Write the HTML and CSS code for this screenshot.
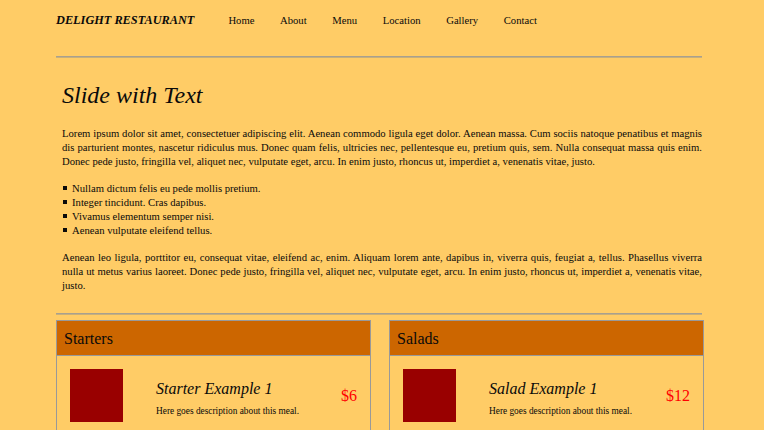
FILE: index.html
```html
<!DOCTYPE html>
<html>
<head>
<meta charset="utf-8">
<title>Delight Restaurant</title>
<link rel="stylesheet" href="styles.css">
</head>
<body>
<div class="page">
  <header class="topbar">
    <div class="brand">DELIGHT RESTAURANT</div>
    <nav class="nav">
      <a href="#">Home</a>
      <a href="#">About</a>
      <a href="#">Menu</a>
      <a href="#">Location</a>
      <a href="#">Gallery</a>
      <a href="#">Contact</a>
    </nav>
  </header>
  <hr class="rule rule-top">
  <section class="intro">
    <h1>Slide with Text</h1>
    <p>Lorem ipsum dolor sit amet, consectetuer adipiscing elit. Aenean commodo ligula eget dolor. Aenean massa. Cum sociis natoque penatibus et magnis dis parturient montes, nascetur ridiculus mus. Donec quam felis, ultricies nec, pellentesque eu, pretium quis, sem. Nulla consequat massa quis enim. Donec pede justo, fringilla vel, aliquet nec, vulputate eget, arcu. In enim justo, rhoncus ut, imperdiet a, venenatis vitae, justo.</p>
    <ul>
      <li>Nullam dictum felis eu pede mollis pretium.</li>
      <li>Integer tincidunt. Cras dapibus.</li>
      <li>Vivamus elementum semper nisi.</li>
      <li>Aenean vulputate eleifend tellus.</li>
    </ul>
    <p class="p2">Aenean leo ligula, porttitor eu, consequat vitae, eleifend ac, enim. Aliquam lorem ante, dapibus in, viverra quis, feugiat a, tellus. Phasellus viverra nulla ut metus varius laoreet. Donec pede justo, fringilla vel, aliquet nec, vulputate eget, arcu. In enim justo, rhoncus ut, imperdiet a, venenatis vitae, justo.</p>
  </section>
  <hr class="rule rule-bottom">
  <section class="menus">
    <div class="panel">
      <div class="panel-head">Starters</div>
      <div class="panel-body">
        <div class="thumb"></div>
        <div class="dish">
          <div class="dish-title">Starter Example 1</div>
          <div class="dish-desc">Here goes description about this meal.</div>
        </div>
        <div class="price">$6</div>
      </div>
    </div>
    <div class="panel">
      <div class="panel-head">Salads</div>
      <div class="panel-body">
        <div class="thumb"></div>
        <div class="dish">
          <div class="dish-title">Salad Example 1</div>
          <div class="dish-desc">Here goes description about this meal.</div>
        </div>
        <div class="price">$12</div>
      </div>
    </div>
  </section>
</div>
</body>
</html>
```

FILE: styles.css
```css
html, body {
  margin: 0;
  padding: 0;
  background: #ffcc66;
}
body {
  font-family: "Liberation Serif", "Times New Roman", serif;
  color: #0a0a0a;
}
.page {
  margin-left: 56px;
  width: 648px;
}
.topbar {
  display: flex;
  align-items: baseline;
  height: 43px;
  padding-top: 13px;
  line-height: 14px;
}
.brand {
  font-size: 12.3px;
  font-weight: bold;
  font-style: italic;
  margin-right: 34px;
}
.nav {
  display: flex;
  gap: 25.6px;
}
.nav a {
  font-size: 10.667px;
  color: #0a0a0a;
  text-decoration: none;
}
.rule {
  margin: 0;
  border: 0;
  width: 646px;
  height: 0;
  border-top: 1px solid #a8a090;
  border-bottom: 1px solid #c8b07a;
}
.intro {
  padding: 0 2px 0 6px;
  width: 640px;
}
h1 {
  margin: 23px 0 0;
  font-size: 24px;
  line-height: 28px;
  font-weight: normal;
  font-style: italic;
}
.intro p {
  margin: 18px 0 0;
  font-size: 10.667px;
  line-height: 14px;
  text-align: justify;
}
.intro ul {
  margin: 12.7px 0 0;
  padding: 0;
  list-style: none;
  font-size: 10.667px;
  line-height: 14px;
}
.intro li::before {
  content: "";
  display: inline-block;
  width: 4px;
  height: 4px;
  background: #0a0a0a;
  margin: 0 5px 0 1px;
  vertical-align: 2px;
}
.intro p.p2 {
  margin-top: 13px;
}
.rule-bottom {
  margin-top: 20px;
}
.menus {
  display: grid;
  grid-template-columns: 315px 315px;
  gap: 18px;
  margin-top: 5px;
}
.panel {
  border: 1px solid #999;
}
.panel-head {
  background: #cc6600;
  border-bottom: 1px solid #999;
  height: 34px;
  line-height: 35px;
  padding-left: 7px;
  font-size: 16px;
}
.panel-body {
  display: flex;
  align-items: center;
  padding: 13px 13px 13px 13px;
}
.thumb {
  width: 53px;
  height: 53px;
  background: #990000;
  flex: none;
}
.dish {
  flex: 1;
  margin-left: 33px;
  padding-top: 5px;
}
.dish-title {
  font-size: 16px;
  line-height: 20px;
  font-style: italic;
}
.dish-desc {
  margin-top: 6px;
  font-size: 9.33px;
  line-height: 12px;
}
.price {
  color: #ff0000;
  font-size: 16px;
  line-height: 20px;
  padding-top: 2px;
}
```
